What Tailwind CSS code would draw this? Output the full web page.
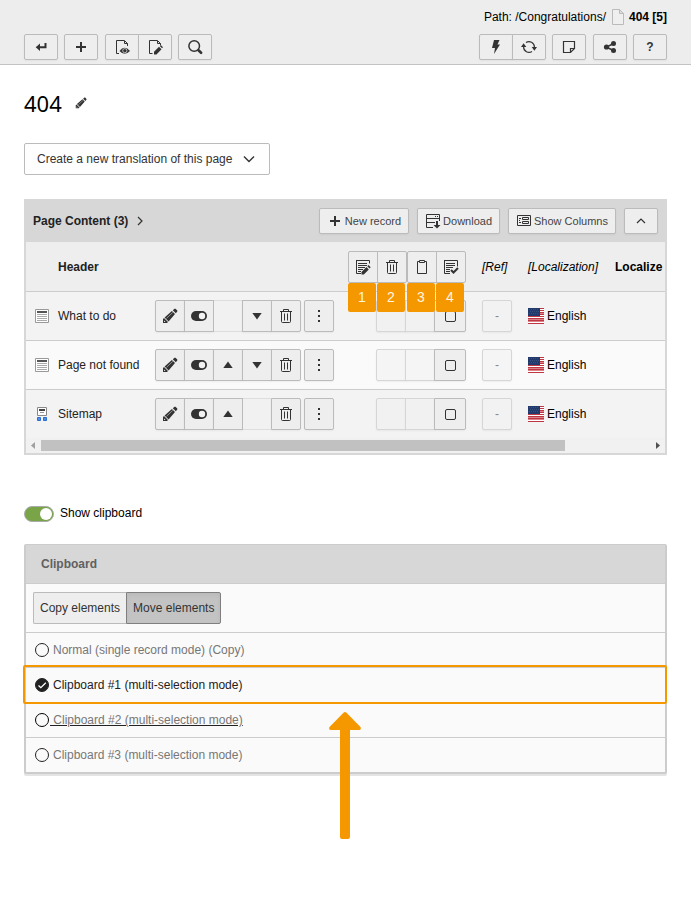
<!DOCTYPE html>
<html lang="en">
<head>
<meta charset="utf-8">
<meta name="viewport" content="width=device-width, initial-scale=1">
<title>404 - List module</title>
<script src="https://cdn.jsdelivr.net/npm/@tailwindcss/browser@4"></script>
</head>
<body class="bg-white text-black text-[12px] leading-4 font-['Liberation_Sans',Arial,sans-serif]">

<svg class="hidden" aria-hidden="true">
  <symbol id="pencil" viewBox="0 0 16 16"><path fill="#333" d="M1 15v-4l1-1 4 4-1 1zM2.600 9.400 9.900 3l3.100 3.100-6.400 7.300zM10.800 2.200l1.700-1.500h1l1.800 1.800v1L13.800 5.200z"/><path stroke="#aaa" stroke-width=".8" d="m4.500 10.300 6.300-5.900"/><path fill="#eee" d="M2 12.500 3.500 14H2z"/></symbol>
  <symbol id="switch" viewBox="0 0 16 16"><rect y="3" width="16" height="10" rx="5" fill="#333"/><circle cx="11" cy="8" r="3.200" fill="#f2f2f2"/></symbol>
  <symbol id="up" viewBox="0 0 16 16"><path fill="#333" d="M8 4.500 12.700 11H3.300z"/></symbol>
  <symbol id="down" viewBox="0 0 16 16"><path fill="#333" d="M8 11.500 3.300 5h9.400z"/></symbol>
  <symbol id="trash" viewBox="0 0 16 16"><path fill="none" stroke="#333" d="M2 3.500h12M5.500 3V1.500h5V3M3.500 4v9.500q0 1 1 1h7q1 0 1-1V4M6.500 5.500v7M9.500 5.500v7"/></symbol>
  <symbol id="dots" viewBox="0 0 16 16"><path fill="#333" d="M7 2h2v2H7zM7 7h2v2H7zM7 12h2v2H7z"/></symbol>
  <symbol id="plus" viewBox="0 0 16 16"><path fill="#333" d="M7 3h2v4h4v2H9v4H7V9H3V7h4z"/></symbol>
  <symbol id="textpage" viewBox="0 0 16 16"><path fill="#fff" stroke="#999" d="M1.500 1.500h13v13h-13z"/><path fill="#555" d="M3 3h10v2H3z"/><path stroke="#aaa" d="M3 6.500h10M3 8.500h10M3 10.500h10M3 12.500h10"/></symbol>
  <symbol id="sitemap" viewBox="0 0 16 16"><path fill="#fff" stroke="#888" d="M3.500 1.500h9v8h-9z"/><path fill="#444" d="M5 3h6v2H5z"/><path stroke="#999" d="M6 6.500h4"/><path fill="#4b8fea" stroke="#2d6fd0" d="M3.500 11.500h3v3h-3zM9.500 11.500h3v3h-3z"/></symbol>
  <symbol id="flag" viewBox="0 0 16 16"><path fill="#fff" d="M0 0h16v16H0z"/><path stroke="#bf3644" d="M12 .5h4M12 2.500h4M12 4.500h4M12 6.500h4M0 8.500h16M0 10.500h16M0 12.500h16M0 15.500h16"/><path fill="#dd8088" d="M12 5h4v1h-4zM0 11h16v1H0zM0 13h16v1H0z"/><path fill="#223a6b" d="M0 0h12v8H0z"/><path stroke="#44598a" stroke-width=".7" stroke-dasharray="1 1" d="M1 1.500h10M2 3.500h9M1 5.500h10"/></symbol>
</svg>

<header class="bg-[#ededed] border-b border-[#c3c3c3] px-6 pb-1">
  <div class="h-[34px] flex items-center justify-end">
    <span>Path: /Congratulations/</span>
    <svg class="w-4 h-4 ml-1 mr-[3px]" viewBox="0 0 16 16" aria-hidden="true"><path fill="#efefef" stroke="#bbb" d="M2.500.5h7l4 4v11h-11z"/><path fill="#ddd" stroke="#bbb" d="M9.500.5v4h4z"/></svg>
    <strong>404 [5]</strong>
  </div>
  <div class="flex justify-between">
    <div class="flex gap-[6px]">
      <button aria-label="Back" class="w-[34px] h-[26px] grid place-items-center border border-[#bbb] rounded-xs bg-[#eee] shadow-xs"><svg class="w-4 h-4" viewBox="0 0 16 16"><path fill="#333" d="M11.500 4h2v5.200H7V12L2.700 8.200 7 4.500v2.700h4.500z"/></svg></button>
      <button aria-label="New" class="w-[34px] h-[26px] grid place-items-center border border-[#bbb] rounded-xs bg-[#eee] shadow-xs"><svg class="w-4 h-4"><use href="#plus"/></svg></button>
      <div class="flex ml-px">
        <button aria-label="View page" class="w-[34px] h-[26px] grid place-items-center border border-[#bbb] rounded-l-xs bg-[#eee] shadow-xs"><svg class="w-4 h-4" viewBox="0 0 16 16"><path fill="none" stroke="#333" d="M5 14.500H2.500v-13h8l3 3V7M10.500 2v2.500h3"/><path fill="#333" d="M5.500 12q5-6.500 10.500 0-5.500 5.500-10.500 0"/><circle cx="10.800" cy="11.700" r="2.100" fill="#333" stroke="#ddd" stroke-width=".8"/></svg></button>
        <button aria-label="Edit page" class="w-[34px] h-[26px] -ml-px grid place-items-center border border-[#bbb] rounded-r-xs bg-[#eee] shadow-xs"><svg class="w-4 h-4" viewBox="0 0 16 16"><path fill="none" stroke="#333" d="M5.500 14.500h-3v-13h8l3 3V6M10.500 2v2.500h3"/><path fill="#333" d="M7 15.500v-2.700l5-5 2.500 2.500-5 5.200zM12.800 7l1-1L16 8.300l-1 1z"/></svg></button>
      </div>
      <button aria-label="Search" class="w-[34px] h-[26px] grid place-items-center border border-[#bbb] rounded-xs bg-[#eee] shadow-xs"><svg class="w-4 h-4" viewBox="0 0 16 16"><circle cx="7.200" cy="7" r="5.300" fill="none" stroke="#333" stroke-width="1.500"/><path stroke="#333" stroke-width="2.600" stroke-linecap="round" d="m11.500 11.300 2.600 2.500"/></svg></button>
    </div>
    <div class="flex gap-[6px]">
      <div class="flex">
        <button aria-label="Clear cache" class="w-[34px] h-[26px] grid place-items-center border border-[#bbb] rounded-l-xs bg-[#eee] shadow-xs"><svg class="w-4 h-4" viewBox="0 0 16 16"><path fill="#333" d="M6 1h5.500L9.500 5.500H12L6 15l1-6H4z"/></svg></button>
        <button aria-label="Reload" class="w-[34px] h-[26px] -ml-px grid place-items-center border border-[#bbb] rounded-r-xs bg-[#eee] shadow-xs"><svg class="w-4 h-4" viewBox="0 0 16 16"><path fill="none" stroke="#333" stroke-width="1.200" d="M2.600 8a5.400 5.400 0 0 0 8.400 4.500M13.400 8A5.400 5.400 0 0 0 5 3.500"/><path fill="#333" d="M0 8 2.600 4.300 5.300 8zM16 8l-2.600 3.700L10.700 8z"/></svg></button>
      </div>
      <button aria-label="Notes" class="w-[34px] h-[26px] grid place-items-center border border-[#bbb] rounded-xs bg-[#eee] shadow-xs"><svg class="w-4 h-4" viewBox="0 0 16 16"><path fill="none" stroke="#333" stroke-width="1.200" d="M2.500 2.500h11v7l-4 4h-7zM9.500 13.500v-4h4"/></svg></button>
      <button aria-label="Share" class="w-[34px] h-[26px] ml-px grid place-items-center border border-[#bbb] rounded-xs bg-[#eee] shadow-xs"><svg class="w-4 h-4" viewBox="0 0 16 16"><path fill="none" stroke="#333" stroke-width="1.500" d="m11.500 4.500-7 3.700 7 3.300"/><g fill="#333"><circle cx="4.500" cy="8" r="2.600"/><circle cx="11.500" cy="4.400" r="2.500"/><circle cx="11.500" cy="11.600" r="2.500"/></g></svg></button>
      <button aria-label="Help" class="w-[34px] h-[26px] grid place-items-center border border-[#bbb] rounded-xs bg-[#eee] shadow-xs text-[#333] text-[12px] font-bold">?</button>
    </div>
  </div>
</header>

<main class="px-6 pb-[130px]">
  <div class="pt-[23px] flex items-center gap-[13px]">
    <h1 class="font-['Noto_Sans',sans-serif] text-[22px] leading-[30px]">404</h1>
    <button aria-label="Edit title" class="w-3 h-3"><svg class="w-3 h-3"><use href="#pencil"/></svg></button>
  </div>

  <div class="relative w-fit mt-[25px]">
    <select aria-label="Create a new translation" class="appearance-none block w-[246px] h-8 pl-3 pr-8 border border-[#bbb] rounded-xs bg-[#fefefe] text-[#333]"><option>Create a new translation of this page</option></select>
    <svg class="absolute right-3 top-2 w-4 h-4 pointer-events-none" viewBox="0 0 16 16"><path fill="none" stroke="#333" stroke-width="1.400" d="m2 5.500 5 5 5-5"/></svg>
  </div>

  <section class="mt-6 border-2 border-t-0 border-[#d7d7d7]">
    <div class="h-[43px] bg-[#d7d7d7] flex items-center px-[7px]">
      <h2 class="font-bold text-[#222]">Page Content (3)</h2>
      <svg class="w-4 h-4 ml-1" viewBox="0 0 16 16"><path fill="none" stroke="#333" stroke-width="1.200" d="m6 4 4 4-4 4"/></svg>
      <div class="ml-auto flex gap-2 text-[11px] text-[#444]">
        <button class="h-[26px] px-[7px] flex items-center gap-[2px] border border-[#bbb] rounded-xs bg-[#eee] shadow-xs"><svg class="w-4 h-4"><use href="#plus"/></svg>New record</button>
        <button class="h-[26px] px-[7px] flex items-center gap-[2px] border border-[#bbb] rounded-xs bg-[#eee] shadow-xs"><svg class="w-4 h-4" viewBox="0 0 16 16"><path fill="none" stroke="#333" d="M8 14.500H1.500v-13h13V8M1.500 5.500h13M1.500 9.500H10M10 3.500h1M12 3.500h1"/><path fill="#333" d="M11 8h2v4h2.500L12 15.500 8.500 12H11z"/></svg>Download</button>
        <button class="h-[26px] px-[7px] flex items-center gap-[2px] border border-[#bbb] rounded-xs bg-[#eee] shadow-xs"><svg class="w-4 h-4" viewBox="0 0 16 16"><path fill="none" stroke="#333" d="M1.500 2.500h13v10h-13zM3 5.500h2M3 7.500h1M3 9.500h2M6.500 4.500h6v2h-6zM6.500 8.500h6v2h-6z"/></svg>Show Columns</button>
        <button aria-label="Collapse" class="w-[34px] h-[26px] grid place-items-center border border-[#bbb] rounded-xs bg-[#eee] shadow-xs"><svg class="w-4 h-4" viewBox="0 0 16 16"><path fill="none" stroke="#333" stroke-width="1.200" d="m4 10 4-4 4 4"/></svg></button>
      </div>
    </div>

    <table class="w-full table-fixed border-separate border-spacing-0 text-left">
      <colgroup><col class="w-8"><col class="w-[97px]"><col class="w-[185px]"><col class="w-[134px]"><col class="w-[46px]"><col class="w-[87px]"><col></colgroup>
      <thead class="bg-[#eee]">
        <tr class="h-[50px]">
          <th class="border-b border-[#ccc]"></th>
          <th class="border-b border-[#ccc] text-[#222]">Header</th>
          <th class="border-b border-[#ccc]"></th>
          <th class="border-b border-[#ccc] pr-2 font-normal">
            <div class="flex justify-end">
              <div class="relative w-[30px]">
                <button aria-label="Edit marked" class="w-[30px] h-8 grid place-items-center border border-[#bbb] rounded-l-xs bg-[#eee]"><svg class="w-4 h-4" viewBox="0 0 16 16"><path fill="none" stroke="#333" d="M6 14.500H1.500M1 1.500h13.500v3M3 4.500h9M1.500 1.500v13M3 6.500h9M3 8.500h7M3 10.500h5M3 12.500h3"/><path fill="#333" d="M6.500 15.500V13l5-5 2.300 2.500-5 5zM12.300 7.200l1.200-1.200L15.700 8.300l-1.200 1.200z"/></svg></button>
                <span class="absolute left-0 top-8 z-10 w-7 h-[29px] grid place-items-center rounded-xs bg-[#f59800] text-[#fff6e0] text-[14px]">1</span>
              </div>
              <div class="relative w-[30px] -ml-px">
                <button aria-label="Delete marked" class="w-[30px] h-8 grid place-items-center border border-[#bbb] rounded-r-xs bg-[#eee]"><svg class="w-4 h-4"><use href="#trash"/></svg></button>
                <span class="absolute left-0 top-8 z-10 w-7 h-[29px] grid place-items-center rounded-xs bg-[#f59800] text-[#fff6e0] text-[14px]">2</span>
              </div>
              <div class="relative w-[30px]">
                <button aria-label="Paste" class="w-[30px] h-8 grid place-items-center border border-[#bbb] rounded-l-xs bg-[#eee]"><svg class="w-4 h-4" viewBox="0 0 16 16"><path fill="none" stroke="#333" d="M5.500 2.500h-2v12h9v-12h-2M5.500 1.500v2h5v-2z"/></svg></button>
                <span class="absolute left-0 top-8 z-10 w-7 h-[29px] grid place-items-center rounded-xs bg-[#f59800] text-[#fff6e0] text-[14px]">3</span>
              </div>
              <div class="relative w-[30px] -ml-px">
                <button aria-label="Mark all" class="w-[30px] h-8 grid place-items-center border border-[#bbb] rounded-r-xs bg-[#eee]"><svg class="w-4 h-4" viewBox="0 0 16 16"><path fill="none" stroke="#333" d="M7 14.500H1.500M1 1.500h13.500v6M3 4.500h9M1.500 1.500v13M3 6.500h9M3 8.500h7M3 10.500h4M3 12.500h4"/><path fill="none" stroke="#333" stroke-width="2" d="m8 11 2.500 2.500L15 9"/></svg></button>
                <span class="absolute left-0 top-8 z-10 w-7 h-[29px] grid place-items-center rounded-xs bg-[#f59800] text-[#fff6e0] text-[14px]">4</span>
              </div>
            </div>
          </th>
          <th class="border-b border-[#ccc] pl-2 font-normal italic">[Ref]</th>
          <th class="border-b border-[#ccc] pl-2 font-normal italic">[Localization]</th>
          <th class="border-b border-[#ccc] pl-2">Localize</th>
        </tr>
      </thead>
      <tbody>
        <tr class="h-[49px] bg-[#f3f3f3]">
          <td class="border-b border-[#ccc] pl-2"><svg class="w-4 h-4"><use href="#textpage"/></svg></td>
          <td class="border-b border-[#ccc] text-[#222]">What to do</td>
          <td class="border-b border-[#ccc]">
            <div class="flex">
              <button aria-label="Edit" class="w-[30px] h-8 grid place-items-center border border-[#bbb] rounded-l-xs bg-[#eee] shadow-xs"><svg class="w-4 h-4"><use href="#pencil"/></svg></button>
              <button aria-label="Hide" class="w-[30px] h-8 -ml-px grid place-items-center border border-[#bbb] bg-[#eee] shadow-xs"><svg class="w-4 h-4"><use href="#switch"/></svg></button>
              <span class="w-7 h-8 border-y border-[#ddd] bg-[#f1f1f1]"></span>
              <button aria-label="Move down" class="w-[30px] h-8 grid place-items-center border border-[#bbb] bg-[#eee] shadow-xs"><svg class="w-4 h-4"><use href="#down"/></svg></button>
              <button aria-label="Delete" class="w-[30px] h-8 -ml-px grid place-items-center border border-[#bbb] rounded-r-xs bg-[#eee] shadow-xs"><svg class="w-4 h-4"><use href="#trash"/></svg></button>
              <button aria-label="More" class="w-[30px] h-8 ml-[3px] grid place-items-center border border-[#bbb] rounded-xs bg-[#eee] shadow-xs"><svg class="w-4 h-4"><use href="#dots"/></svg></button>
            </div>
          </td>
          <td class="border-b border-[#ccc] pr-2">
            <div class="flex justify-end">
              <span class="w-[30px] h-8 border border-[#d6d6d6] rounded-l-xs bg-[#f1f1f1] shadow-xs"></span>
              <span class="w-[30px] h-8 -ml-px border border-[#d6d6d6] bg-[#f1f1f1] shadow-xs"></span>
              <label class="w-8 h-8 -ml-px grid place-items-center border border-[#bbb] rounded-r-xs bg-[#eee] shadow-xs"><input type="checkbox" aria-label="Select What to do" class="appearance-none w-[11px] h-[11px] border border-[#333] rounded-xs checked:bg-[#333]"></label>
            </div>
          </td>
          <td class="border-b border-[#ccc] pl-2"><button disabled class="block w-[30px] h-8 border border-[#d6d6d6] rounded-xs bg-[#f2f2f2] text-[#888] shadow-xs">-</button></td>
          <td class="border-b border-[#ccc] pl-2"><div class="flex items-center gap-[3px]"><svg class="w-4 h-4"><use href="#flag"/></svg>English</div></td>
          <td class="border-b border-[#ccc]"></td>
        </tr>
        <tr class="h-[49px] bg-[#fafafa]">
          <td class="border-b border-[#ccc] pl-2"><svg class="w-4 h-4"><use href="#textpage"/></svg></td>
          <td class="border-b border-[#ccc] text-[#222]">Page not found</td>
          <td class="border-b border-[#ccc]">
            <div class="flex">
              <button aria-label="Edit" class="w-[30px] h-8 grid place-items-center border border-[#bbb] rounded-l-xs bg-[#eee] shadow-xs"><svg class="w-4 h-4"><use href="#pencil"/></svg></button>
              <button aria-label="Hide" class="w-[30px] h-8 -ml-px grid place-items-center border border-[#bbb] bg-[#eee] shadow-xs"><svg class="w-4 h-4"><use href="#switch"/></svg></button>
              <button aria-label="Move up" class="w-[30px] h-8 -ml-px grid place-items-center border border-[#bbb] bg-[#eee] shadow-xs"><svg class="w-4 h-4"><use href="#up"/></svg></button>
              <button aria-label="Move down" class="w-[30px] h-8 -ml-px grid place-items-center border border-[#bbb] bg-[#eee] shadow-xs"><svg class="w-4 h-4"><use href="#down"/></svg></button>
              <button aria-label="Delete" class="w-[30px] h-8 -ml-px grid place-items-center border border-[#bbb] rounded-r-xs bg-[#eee] shadow-xs"><svg class="w-4 h-4"><use href="#trash"/></svg></button>
              <button aria-label="More" class="w-[30px] h-8 ml-[3px] grid place-items-center border border-[#bbb] rounded-xs bg-[#eee] shadow-xs"><svg class="w-4 h-4"><use href="#dots"/></svg></button>
            </div>
          </td>
          <td class="border-b border-[#ccc] pr-2">
            <div class="flex justify-end">
              <span class="w-[30px] h-8 border border-[#d6d6d6] rounded-l-xs bg-[#f5f5f5] shadow-xs"></span>
              <span class="w-[30px] h-8 -ml-px border border-[#d6d6d6] bg-[#f5f5f5] shadow-xs"></span>
              <label class="w-8 h-8 -ml-px grid place-items-center border border-[#bbb] rounded-r-xs bg-[#eee] shadow-xs"><input type="checkbox" aria-label="Select Page not found" class="appearance-none w-[11px] h-[11px] border border-[#333] rounded-xs checked:bg-[#333]"></label>
            </div>
          </td>
          <td class="border-b border-[#ccc] pl-2"><button disabled class="block w-[30px] h-8 border border-[#d6d6d6] rounded-xs bg-[#f5f5f5] text-[#888] shadow-xs">-</button></td>
          <td class="border-b border-[#ccc] pl-2"><div class="flex items-center gap-[3px]"><svg class="w-4 h-4"><use href="#flag"/></svg>English</div></td>
          <td class="border-b border-[#ccc]"></td>
        </tr>
        <tr class="h-12 bg-[#f3f3f3]">
          <td class="pl-2"><svg class="w-4 h-4"><use href="#sitemap"/></svg></td>
          <td class="text-[#222]">Sitemap</td>
          <td>
            <div class="flex">
              <button aria-label="Edit" class="w-[30px] h-8 grid place-items-center border border-[#bbb] rounded-l-xs bg-[#eee] shadow-xs"><svg class="w-4 h-4"><use href="#pencil"/></svg></button>
              <button aria-label="Hide" class="w-[30px] h-8 -ml-px grid place-items-center border border-[#bbb] bg-[#eee] shadow-xs"><svg class="w-4 h-4"><use href="#switch"/></svg></button>
              <button aria-label="Move up" class="w-[30px] h-8 -ml-px grid place-items-center border border-[#bbb] bg-[#eee] shadow-xs"><svg class="w-4 h-4"><use href="#up"/></svg></button>
              <span class="w-7 h-8 border-y border-[#ddd] bg-[#f1f1f1]"></span>
              <button aria-label="Delete" class="w-[30px] h-8 grid place-items-center border border-[#bbb] rounded-r-xs bg-[#eee] shadow-xs"><svg class="w-4 h-4"><use href="#trash"/></svg></button>
              <button aria-label="More" class="w-[30px] h-8 ml-[3px] grid place-items-center border border-[#bbb] rounded-xs bg-[#eee] shadow-xs"><svg class="w-4 h-4"><use href="#dots"/></svg></button>
            </div>
          </td>
          <td class="pr-2">
            <div class="flex justify-end">
              <span class="w-[30px] h-8 border border-[#d6d6d6] rounded-l-xs bg-[#f1f1f1] shadow-xs"></span>
              <span class="w-[30px] h-8 -ml-px border border-[#d6d6d6] bg-[#f1f1f1] shadow-xs"></span>
              <label class="w-8 h-8 -ml-px grid place-items-center border border-[#bbb] rounded-r-xs bg-[#eee] shadow-xs"><input type="checkbox" aria-label="Select Sitemap" class="appearance-none w-[11px] h-[11px] border border-[#333] rounded-xs checked:bg-[#333]"></label>
            </div>
          </td>
          <td class="pl-2"><button disabled class="block w-[30px] h-8 border border-[#d6d6d6] rounded-xs bg-[#f2f2f2] text-[#888] shadow-xs">-</button></td>
          <td class="pl-2"><div class="flex items-center gap-[3px]"><svg class="w-4 h-4"><use href="#flag"/></svg>English</div></td>
          <td></td>
        </tr>
      </tbody>
    </table>
    <div class="h-[15px] bg-[#f1f1f1] flex items-center" aria-hidden="true">
      <svg class="w-[15px] h-[15px]" viewBox="0 0 15 15"><path fill="#a0a0a0" d="M9 4v7L5 7.500z"/></svg>
      <div class="flex-1"><div class="w-[86%] h-[11px] bg-[#c1c1c1]"></div></div>
      <svg class="w-[15px] h-[15px]" viewBox="0 0 15 15"><path fill="#505050" d="M6 4v7l4-3.500z"/></svg>
    </div>
  </section>

  <label class="mt-[49px] w-fit flex items-center gap-[6px]">
    <span class="relative w-[30px] h-4 mt-[2px]">
      <input type="checkbox" checked class="peer appearance-none block w-[30px] h-4 rounded-full border border-[#aaa] bg-[#bbb] checked:bg-[#79a548]">
      <span class="absolute top-[2px] left-[2px] peer-checked:left-4 w-3 h-3 rounded-full bg-white"></span>
    </span>
    Show clipboard
  </label>

  <section class="relative mt-[22px] border-2 border-t border-[#ccc] rounded-t-xs rounded-b-xs bg-[#fafafa] shadow-[0_2px_0_#e4e4e4]">
    <h2 class="h-[39px] flex items-center px-[15px] bg-[#d7d7d7] border-b border-[#ccc] font-bold text-[#606060]">Clipboard</h2>
    <div class="h-[49px] flex items-center px-[7px] border-b border-[#ccc] text-[#333]">
      <button aria-pressed="false" class="h-8 px-[6px] border border-r-0 border-[#bbb] rounded-l-xs bg-[#eee]">Copy elements</button>
      <button aria-pressed="true" class="h-8 px-[6px] border border-[#7f7f7f] rounded-r-xs bg-[#c3c3c3] inset-shadow-sm">Move elements</button>
    </div>
    <ul>
      <li class="h-[35px] flex items-center border-b border-[#ccc]">
        <label class="flex items-center px-[9px] gap-1 text-[#777]"><input type="radio" name="pad" class="appearance-none w-[14px] h-[14px] rounded-full border border-[#222]"><span>Normal (single record mode) (Copy)</span></label>
      </li>
      <li class="relative h-[35px] flex items-center border-b border-[#ccc]">
        <label class="flex items-center px-[9px] gap-1 text-[#222]">
          <span class="relative w-[14px] h-[14px]"><input type="radio" name="pad" checked class="appearance-none block w-[14px] h-[14px] rounded-full border border-[#222] checked:bg-[#222]"><svg class="absolute inset-0 w-[14px] h-[14px] pointer-events-none" viewBox="0 0 14 14"><path fill="none" stroke="#fff" stroke-width="1.300" d="m3.500 7.500 2.300 2.200 5-5"/></svg></span>
          <span>Clipboard #1 (multi-selection mode)</span></label>
        <span class="absolute -left-[3px] -right-[2px] -top-[3px] -bottom-[2px] border-2 border-[#f59800] rounded-xs pointer-events-none"></span>
      </li>
      <li class="h-[35px] flex items-center border-b border-[#ccc]">
        <label class="flex items-center px-[9px] gap-px text-[#777]"><input type="radio" name="pad" class="appearance-none w-[14px] h-[14px] rounded-full border border-black"><span class="whitespace-pre underline decoration-[#222]"> Clipboard #2 (multi-selection mode)</span></label>
      </li>
      <li class="h-[34px] flex items-center">
        <label class="flex items-center px-[9px] gap-1 text-[#777]"><input type="radio" name="pad" class="appearance-none w-[14px] h-[14px] rounded-full border border-[#222]"><span>Clipboard #3 (multi-selection mode)</span></label>
      </li>
    </ul>
    <svg class="absolute left-1/2 top-[167px] -ml-[17px] w-8 h-[127px] pointer-events-none" viewBox="0 0 32 127"><path fill="#f59800" d="M14.500.700q1.500-1.400 3 0L31.500 15q1 2.500-1 3H21v107q0 2-2 2h-6q-2 0-2-2V18H1.500q-2-.5-1-3z"/></svg>
  </section>
</main>
</body>
</html>
